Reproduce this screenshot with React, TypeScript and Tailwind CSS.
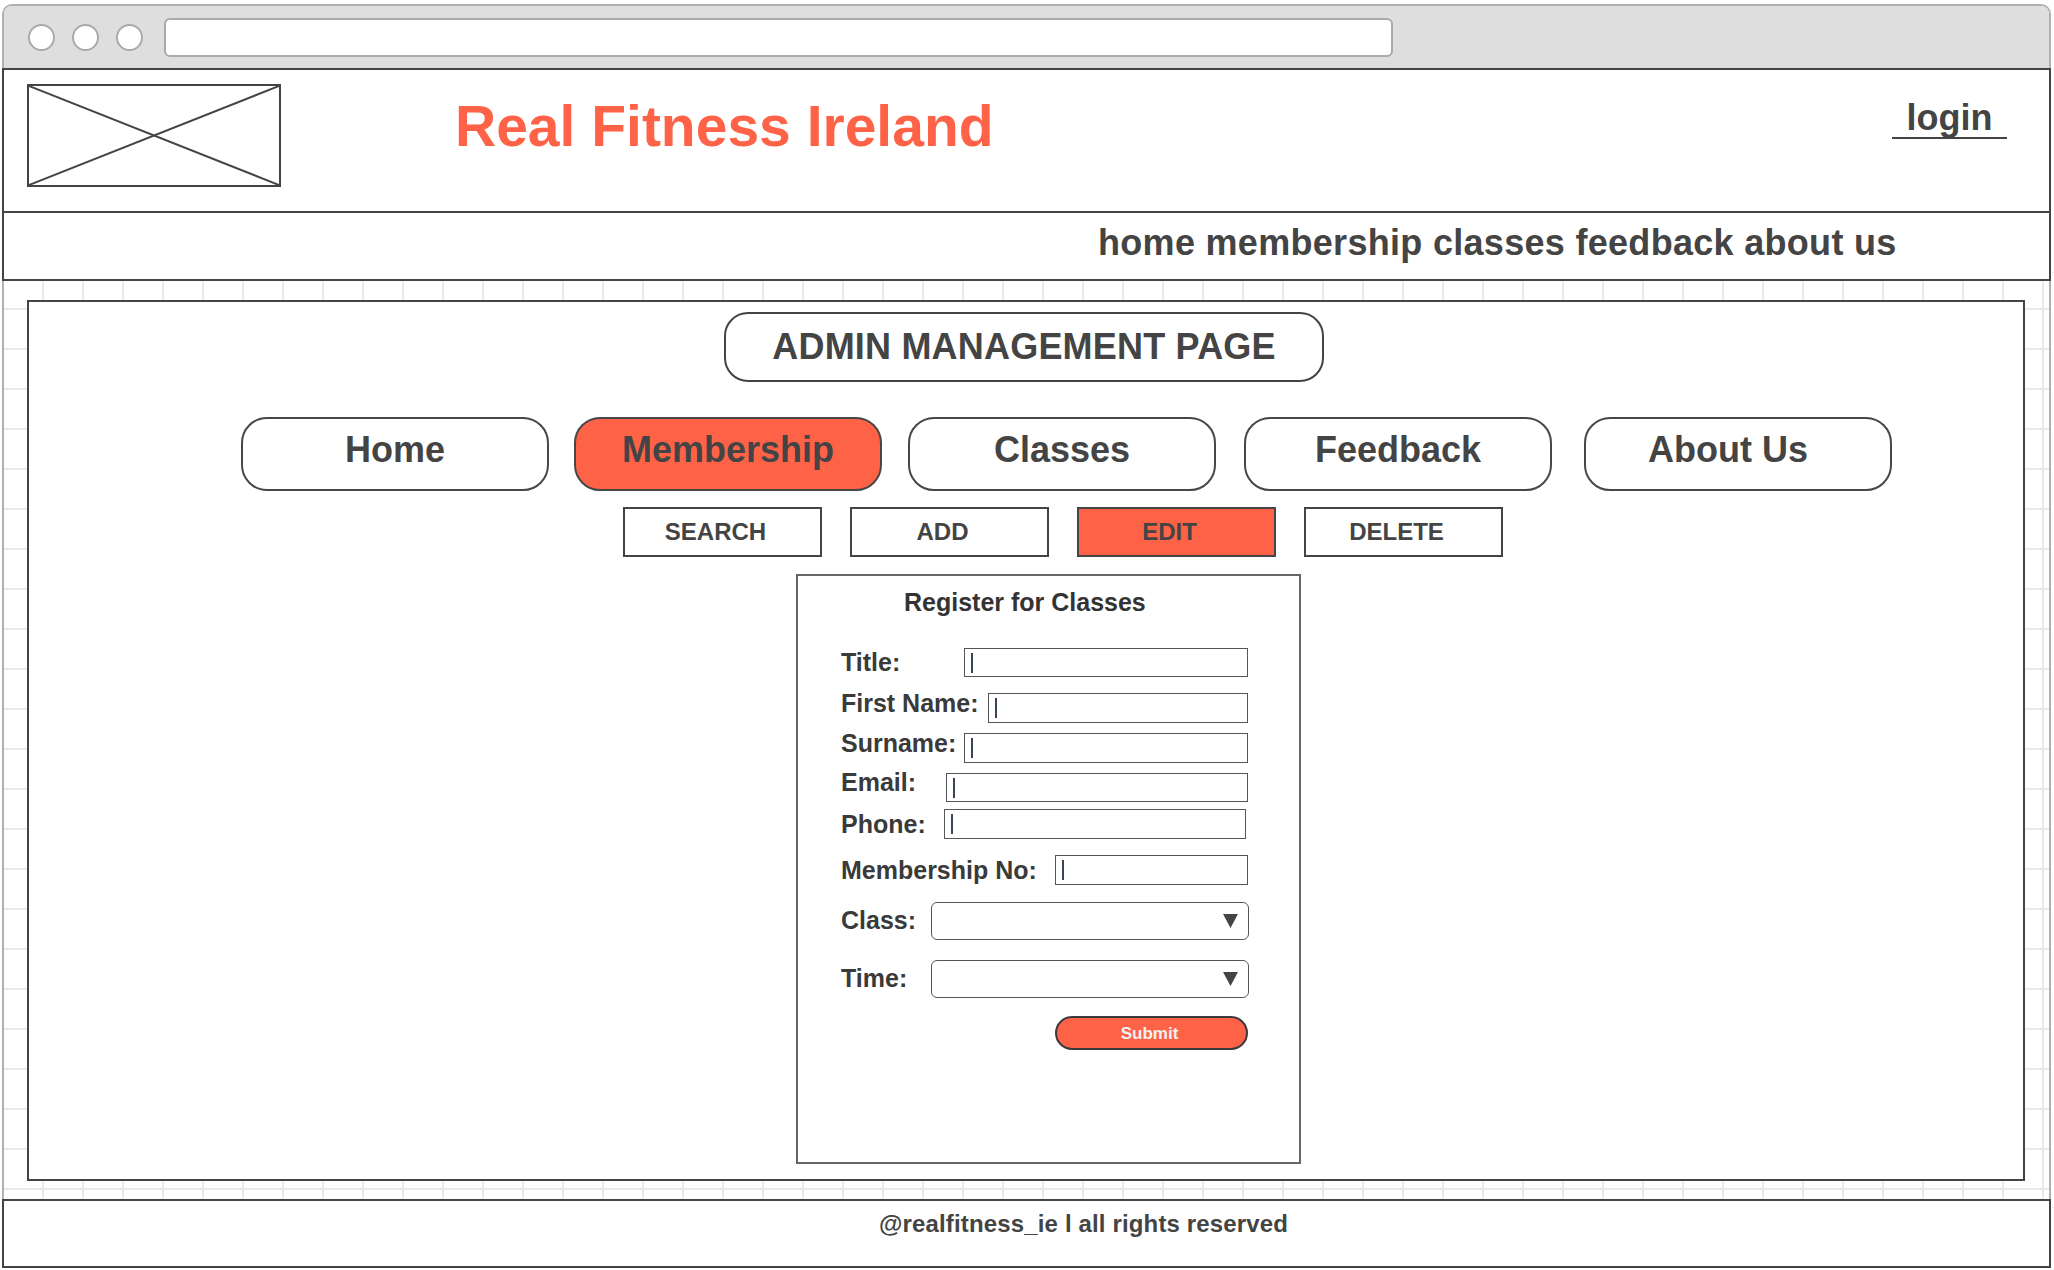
import React from "react";

const NavBtn = ({ label, active, className }: { label: string; active?: boolean; className?: string }) => (
  <div
    className={
      "w-[308px] h-[74px] rounded-[26px] border-2 border-[#474747] flex items-center justify-center pb-[8px] text-[36px] leading-[36px] font-bold text-[#444] " +
      (active ? "bg-[#ff6347] " : "bg-white ") +
      (className ?? "")
    }
  >
    {label}
  </div>
);

const SubBtn = ({ label, active }: { label: string; active?: boolean }) => (
  <div
    className={
      "w-[199px] h-[50px] border-2 border-[#444] flex items-center justify-center pr-[14px] text-[24px] leading-[24px] font-bold text-[#444] " +
      (active ? "bg-[#ff6347]" : "bg-white")
    }
  >
    {label}
  </div>
);

const Cursor = () => <div className="w-[2px] h-[20px] bg-[#3a4556]" />;

const TextBox = ({ className }: { className: string }) => (
  <div className={"ml-auto border-[1.5px] border-[#555] bg-white flex items-center pl-[6px] " + className}>
    <Cursor />
  </div>
);

const Triangle = () => (
  <svg width="15" height="14" viewBox="0 0 15 14">
    <polygon points="0,0 15,0 7.5,14" fill="#444" />
  </svg>
);

const Select = ({ className }: { className: string }) => (
  <div
    className={
      "ml-auto mr-[-1px] w-[318px] h-[38px] rounded-[6px] border-[1.5px] border-[#555] bg-white flex items-center justify-end pr-[10px] " +
      className
    }
  >
    <Triangle />
  </div>
);

const Label = ({ children, className }: { children: React.ReactNode; className?: string }) => (
  <div className={"whitespace-nowrap text-[25px] leading-[28px] font-bold text-[#3a3a3a] " + (className ?? "")}>
    {children}
  </div>
);

export default function App() {
  return (
    <div className="w-[2054px] h-[1270px] bg-white overflow-hidden font-['Liberation_Sans',Arial,sans-serif] text-[#444]">
      <div className="ml-[2px] mt-[4px] w-[2049px] h-[1264px] border-2 border-b-0 border-[#b0b0b0] rounded-t-[10px] flex flex-col bg-white">
        {/* title bar */}
        <div className="h-[62px] shrink-0 bg-[#dedede] rounded-t-[8px] flex items-center">
          <div className="ml-[24px] w-[27px] h-[27px] rounded-full border-2 border-[#aaa] bg-white" />
          <div className="ml-[17px] w-[27px] h-[27px] rounded-full border-2 border-[#aaa] bg-white" />
          <div className="ml-[17px] w-[27px] h-[27px] rounded-full border-2 border-[#aaa] bg-white" />
          <div className="ml-[21px] w-[1229px] h-[39px] rounded-[6px] border-2 border-[#aaa] bg-white" />
        </div>

        {/* header */}
        <header className="-mx-[2px] h-[145px] shrink-0 border-2 border-[#444] bg-white flex">
          <div className="ml-[23px] mt-[14px] w-[254px] h-[103px] border-2 border-[#444]">
            <svg width="250" height="99" viewBox="0 0 250 99" className="block">
              <line x1="0" y1="0" x2="250" y2="99" stroke="#444" strokeWidth="2" />
              <line x1="0" y1="99" x2="250" y2="0" stroke="#444" strokeWidth="2" />
            </svg>
          </div>
          <div className="ml-[174px] mt-[28px] whitespace-nowrap text-[57px] leading-[57px] font-bold text-[#ff6347]">
            Real Fitness Ireland
          </div>
          <div className="ml-auto mr-[42px] mt-[30px] flex flex-col items-center">
            <span className="text-[36px] leading-[36px] font-bold text-[#444]">login</span>
            <div className="mt-[1px] w-[115px] h-[2px] bg-[#444]" />
          </div>
        </header>

        {/* nav */}
        <nav className="-mx-[2px] h-[68px] shrink-0 border-2 border-t-0 border-[#444] bg-white pl-[1094px] pt-[12px] whitespace-nowrap text-[36px] leading-[36px] font-bold tracking-[0.3px] text-[#444]">
          home membership classes feedback about us
        </nav>

        {/* grid canvas */}
        <div className="h-[918px] shrink-0 pt-[19px] pl-[23px] [background-image:linear-gradient(to_right,#e9e9e9_2px,transparent_2px),linear-gradient(to_bottom,#e9e9e9_2px,transparent_2px),linear-gradient(to_right,#dddddd_2px,transparent_2px)] [background-size:40px_40px,40px_40px,200px_200px] [background-position:38px_27px,38px_27px,198px_0px]">
          <main className="w-[1998px] h-[881px] border-2 border-[#444] bg-white flex flex-col items-start">
            <div className="ml-[695px] mt-[10px] w-[600px] h-[70px] rounded-[24px] border-2 border-[#444] flex items-center justify-center text-[36px] leading-[36px] font-bold tracking-[0.2px] text-[#444]">
              ADMIN MANAGEMENT PAGE
            </div>

            <div className="mt-[35px] ml-[212px] flex">
              <NavBtn label="Home" />
              <NavBtn label="Membership" active className="ml-[25px]" />
              <NavBtn label="Classes" className="ml-[26px]" />
              <NavBtn label="Feedback" className="ml-[28px]" />
              <NavBtn label="About Us" className="ml-[32px] pr-[20px]" />
            </div>

            <div className="mt-[16px] ml-[594px] flex gap-[28px]">
              <SubBtn label="SEARCH" />
              <SubBtn label="ADD" />
              <SubBtn label="EDIT" active />
              <SubBtn label="DELETE" />
            </div>

            <div className="mt-[17px] ml-[767px] w-[505px] h-[590px] border-2 border-[#666] bg-white flex flex-col">
              <div className="pt-[12px] pl-[106px] whitespace-nowrap text-[25px] leading-[28px] font-bold text-[#333]">
                Register for Classes
              </div>
              <div className="pl-[43px] pr-[51px] flex flex-col">
                <div className="mt-[32px] flex items-start">
                  <Label>Title:</Label>
                  <TextBox className="w-[284px] h-[29px]" />
                </div>
                <div className="mt-[12px] flex items-start">
                  <Label>First Name:</Label>
                  <TextBox className="mt-[4px] w-[260px] h-[30px]" />
                </div>
                <div className="mt-[6px] flex items-start">
                  <Label>Surname:</Label>
                  <TextBox className="mt-[4px] w-[284px] h-[30px]" />
                </div>
                <div className="mt-[5px] flex items-start">
                  <Label>Email:</Label>
                  <TextBox className="mt-[5px] w-[302px] h-[29px]" />
                </div>
                <div className="mt-[7px] flex items-start">
                  <Label className="mt-[1px]">Phone:</Label>
                  <TextBox className="mr-[2px] w-[302px] h-[30px]" />
                </div>
                <div className="mt-[16px] flex items-start">
                  <Label className="mt-[1px]">Membership No:</Label>
                  <TextBox className="w-[193px] h-[30px]" />
                </div>
                <div className="mt-[17px] flex items-start">
                  <Label className="mt-[4px]">Class:</Label>
                  <Select className="" />
                </div>
                <div className="mt-[20px] flex items-start">
                  <Label className="mt-[4px]">Time:</Label>
                  <Select className="" />
                </div>
                <div className="mt-[18px] flex">
                  <div className="ml-auto w-[193px] h-[34px] rounded-full border-[2.5px] border-[#3a3a3a] bg-[#ff6347] flex items-center justify-center pr-[4px] text-[17px] leading-[17px] font-bold text-[#f2f2f2]">
                    Submit
                  </div>
                </div>
              </div>
            </div>
          </main>
        </div>

        {/* footer */}
        <footer className="-mx-[2px] h-[69px] shrink-0 border-2 border-[#444] bg-white pl-[875px] pt-[11px] whitespace-nowrap text-[24px] leading-[24px] font-bold tracking-[0.15px] text-[#444]">
          @realfitness_ie l all rights reserved
        </footer>
      </div>
    </div>
  );
}
